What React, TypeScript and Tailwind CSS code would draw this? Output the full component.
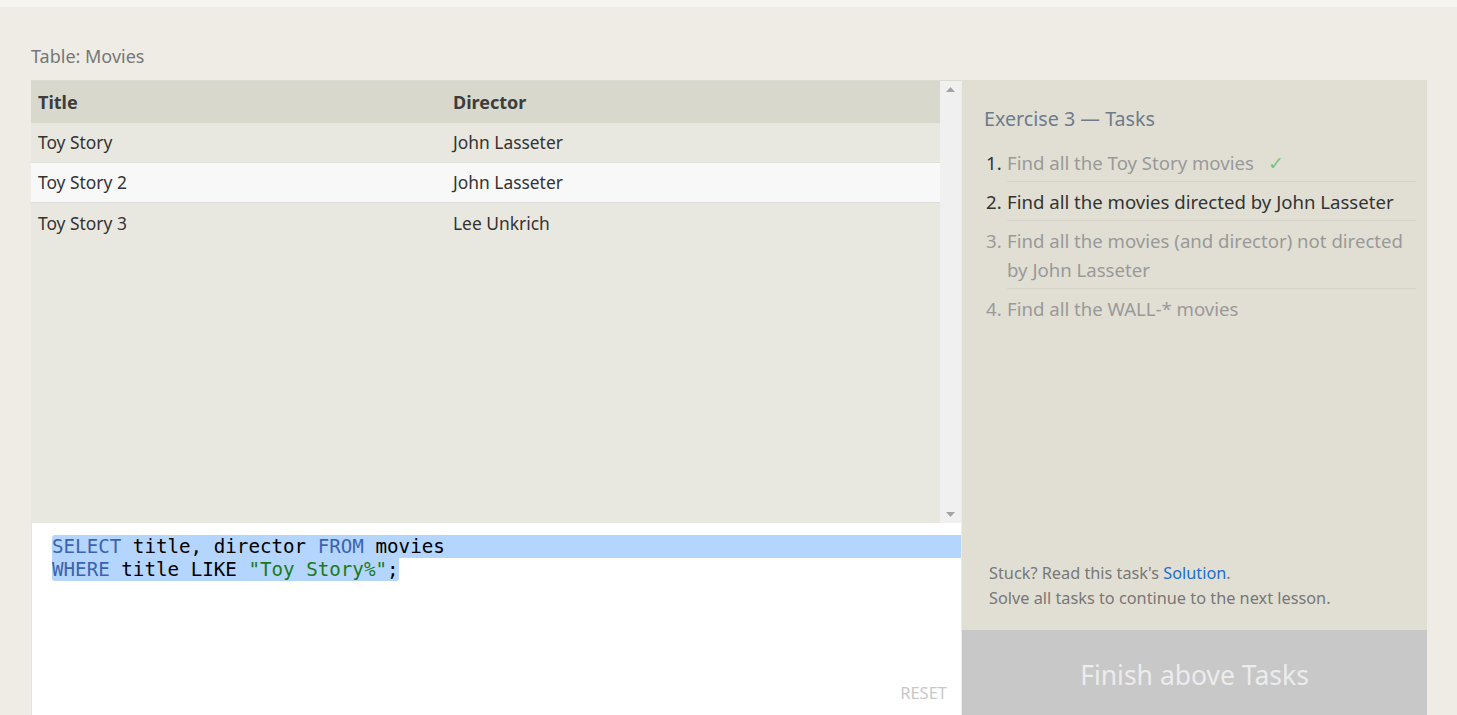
import React from "react";

const rows = [
  { title: "Toy Story", director: "John Lasseter" },
  { title: "Toy Story 2", director: "John Lasseter" },
  { title: "Toy Story 3", director: "Lee Unkrich" },
];

const tasks = [
  { text: "Find all the Toy Story movies", state: "done" },
  { text: "Find all the movies directed by John Lasseter", state: "active" },
  { text: "Find all the movies (and director) not directed by John Lasseter", state: "todo" },
  { text: "Find all the WALL-* movies", state: "todo" },
];

export default function App() {
  const sans = { fontFamily: '"Noto Sans", "Open Sans", sans-serif' };
  return (
    <div className="w-screen h-[715px] overflow-hidden bg-[#efece5]" style={sans}>
      {/* top strip */}
      <div className="h-[7px] bg-[#f6f5f1]" />

      <div className="pl-[31px] pr-[30px] pt-[37px]">
        <div className="text-[18px] leading-[24px] text-[#777] mb-[12px]">Table: Movies</div>

        <div className="flex">
          {/* left: result table + editor */}
          <div className="w-[930px] flex flex-col">
            <div className="h-[443px] flex bg-[#e9e8e0] border-t border-[#dcdbd3]">
              <div className="flex-1">
                <div className="flex h-[42px] items-center bg-[#d9d8cc] text-[18px] font-bold text-[#3d3d3d]">
                  <div className="w-[422px] pl-[7px]">Title</div>
                  <div>Director</div>
                </div>
                {rows.map((r, i) => (
                  <div
                    key={i}
                    className={`flex h-[40px] items-center text-[17.4px] text-[#333] ${
                      i < rows.length - 1 ? "border-b border-[#dedede]" : ""
                    } ${i === 1 ? "bg-[#f8f8f8]" : "bg-[#e9e8e0]"}`}
                  >
                    <div className="w-[422px] pl-[7px]">{r.title}</div>
                    <div>{r.director}</div>
                  </div>
                ))}
              </div>
              {/* scrollbar */}
              <div className="w-[21px] bg-[#f0f0f0] flex flex-col items-center justify-between py-[6px]">
                <svg width="9" height="5" viewBox="0 0 9 5">
                  <path d="M0 5 L4.5 0 L9 5 Z" fill="#a3a3a3" />
                </svg>
                <svg width="9" height="5" viewBox="0 0 9 5">
                  <path d="M0 0 L4.5 5 L9 0 Z" fill="#a3a3a3" />
                </svg>
              </div>
            </div>

            {/* editor */}
            <div className="h-[200px] bg-white pt-[12px] pl-[20px] relative border-l border-[#e6e4dc]">
              <div
                className="text-[19.2px] leading-[23px] text-black"
                style={{ fontFamily: '"DejaVu Sans Mono", "Liberation Mono", monospace' }}
              >
                <div className="bg-[#b4d5fe] rounded-tl-[3px] whitespace-pre">
                  <span className="text-[#3b63b0]">SELECT</span> title, director <span className="text-[#3b63b0]">FROM</span> movies
                </div>
                <div>
                  <span className="bg-[#b4d5fe] rounded-b-[3px] whitespace-pre inline-block">
                    <span className="text-[#3b63b0]">WHERE</span> title LIKE <span className="text-[#1a7a1a]">"Toy Story%"</span>;
                  </span>
                </div>
              </div>
              <div className="absolute right-[14px] top-[158px] text-[16.5px] text-[#c8c8c8]">RESET</div>
            </div>
          </div>

          {/* right: tasks */}
          <div className="ml-px flex-1 flex flex-col">
            <div className="h-[550px] bg-[#e1dfd4] pl-[22px] pr-[11px] pt-[26px] flex flex-col">
              <div className="text-[19.7px] leading-[26px] text-[#6e7b8b] mb-[11px]">Exercise 3 — Tasks</div>
              <ol className="text-[18.6px]">
                {tasks.map((t, i) => (
                  <li key={i} className="flex">
                    <span className={`w-[23px] shrink-0 pl-[2px] pt-[5px] leading-[29px] ${t.state === "todo" ? "text-[#999]" : "text-[#333]"}`}>
                      {i + 1}.
                    </span>
                    <div
                      className={`flex-1 leading-[29px] pt-[5px] pb-[4px] ${i < tasks.length - 1 ? "border-b border-[#d6d4c8]" : ""} ${
                        t.state === "active" ? "text-[#333]" : "text-[#999]"
                      }`}
                    >
                      {t.text}
                      {t.state === "done" && <span className="ml-[14px] text-[#7cc47c]">✓</span>}
                    </div>
                  </li>
                ))}
              </ol>
              <div className="mt-auto pb-[19px] pl-[5px] text-[16.3px] leading-[25px] text-[#777]">
                <div>
                  Stuck? Read this task's <span className="text-[#1a6dd1]">Solution</span>.
                </div>
                <div>Solve all tasks to continue to the next lesson.</div>
              </div>
            </div>
            <div className="h-[90px] bg-[#c8c8c8] flex items-start justify-center pt-[26px] text-[26.5px] text-[#ececec]">
              Finish above Tasks
            </div>
          </div>
        </div>
      </div>
    </div>
  );
}
